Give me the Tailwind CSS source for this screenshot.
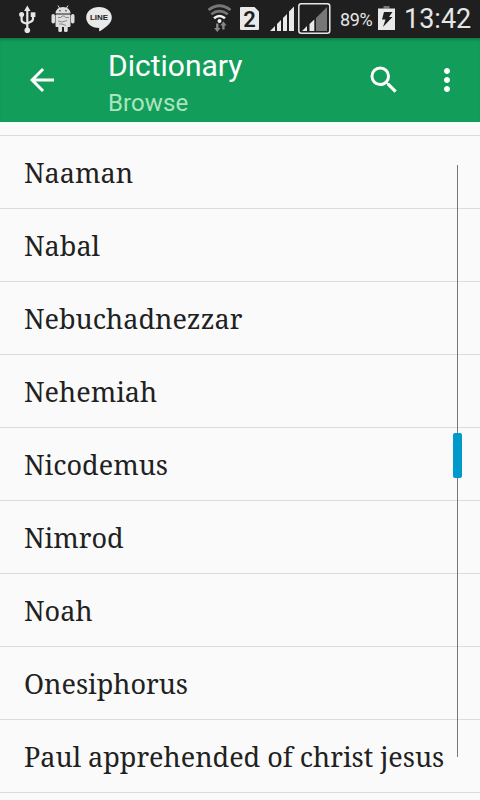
<!DOCTYPE html>
<html lang="en">

<head>
    <meta charset="UTF-8" />
    <meta name="viewport" content="width=device-width, initial-scale=1.0" />
    <title>Dictionary</title>
    <script src="https://cdn.jsdelivr.net/npm/@tailwindcss/browser@4"></script>
</head>

<body class="relative flex h-[800px] w-[480px] flex-col overflow-hidden bg-[#fafafa] font-['Roboto',sans-serif]">
    <!-- Status bar -->
    <div class="flex h-[38px] shrink-0 items-center bg-[#1f1f1f] text-[#e6e6e6]">
        <svg class="ml-[18px] h-[38px] w-[18px]" viewBox="18 0 18 38" fill="#e6e6e6">
            <path d="M27.3 5.500l3.200 5.500h-6.400z" />
            <circle cx="27.300" cy="30.300" r="2.800" />
            <path d="M27.300 9v21M21.600 15v4.500q0 2.500 2 3.100l3.700 1.500M33 15v3.500q0 2.500-2 3.100l-3.700 2" fill="none" stroke="#e6e6e6" stroke-width="2.200" />
            <circle cx="21.600" cy="14.600" r="2.500" />
            <path d="M30.700 12.300h4.700v4.700h-4.700z" />
        </svg>
        <svg class="ml-[15px] h-[38px] w-[24px]" viewBox="51 0 24 38" fill="#dedede">
            <path d="M55.500 13.500q.5-6.500 7.500-6.500T70.500 13.500z" />
            <path d="M58 5.500l2 3.500M68 5.500l-2 3.500" stroke="#dedede" stroke-width="1" />
            <rect x="55.500" y="14.500" width="15" height="12.500" rx="1" />
            <rect x="51.500" y="14" width="3.500" height="9.500" rx="1.700" />
            <rect x="71" y="14" width="3.500" height="9.500" rx="1.700" />
            <rect x="58.300" y="25" width="3.700" height="7" rx="1.500" />
            <rect x="64" y="25" width="3.700" height="7" rx="1.500" />
            <circle cx="60" cy="10.800" r=".8" fill="#333" />
            <circle cx="66" cy="10.800" r=".8" fill="#333" />
            <path d="M58 17.500h3l1-1.500h2.500l1 1.500H69M58 21l4 1 5-1.500M59 24h3l4 1.500" fill="none" stroke="#888" stroke-width="1" />
        </svg>
        <div class="relative ml-[11px] h-[38px] w-[26px]">
            <svg class="h-[38px] w-[26px]" viewBox="86 0 26 38" fill="#e9e9e9">
                <path d="M99 7c7.200 0 12.800 4.600 12.800 10.400 0 6-6.500 10-11.600 13.600-1.300.7-1.200-.6-1-3C91.500 27.800 86.200 23.300 86.200 17.400 86.200 11.600 91.800 7 99 7z" />
            </svg>
            <span class="absolute left-0 top-[12px] w-[26px] text-center font-['Liberation_Sans',sans-serif] text-[8px] font-bold leading-[11px] text-[#222]">LINE</span>
        </div>
        <svg class="ml-[95px] h-[38px] w-[25px]" viewBox="207 0 25 38" fill="none">
            <path d="M208.500 10q11-8.500 22 0" stroke="#777" stroke-width="2.800" />
            <path d="M211.200 14.300q8.300-6.400 16.600 0" stroke="#777" stroke-width="2.500" />
            <path d="M214 18.300q5.500-4.600 11 0" stroke="#f2f2f2" stroke-width="2.600" />
            <circle cx="219.500" cy="21" r="2" fill="#f2f2f2" />
            <path d="M218.500 23.500V28h2l-3.200 4-3.200-4h2v-4.500zM222.200 29.500V25.500h-2l3.200-4 3.200 4h-2v4z" fill="#888" />
        </svg>
        <div class="relative ml-[8px] h-[38px] w-[19px]">
            <svg class="h-[38px] w-[19px]" viewBox="240 0 19 38" fill="#e9e9e9">
                <path d="M241 7h13.500l4.500 4.500V29q0 1-1 1h-17q-1 0-1-1V8q0-1 1-1z" />
            </svg>
            <span class="absolute left-0 top-[8px] w-[19px] text-center text-[22px] font-semibold leading-[23px] text-[#1f1f1f]">2</span>
        </div>
        <svg class="ml-[11px] h-[38px] w-[61px]" viewBox="270 0 61 38" fill="#e9e9e9">
            <path d="M270 31l5-5v5zM277 24l4-4v11h-4zM283 18l4-4v17h-4zM289 11.500l5-5V31h-5z" />
            <rect x="298.800" y="3.800" width="31" height="29.400" rx="2.500" fill="none" stroke="#e6e6e6" stroke-width="1.500" />
            <path d="M316 18L327 7v24h-11z" fill="#777" />
            <path d="M302 31l5-5v5zM309.500 24l4.800-4.500V31h-4.800z" />
        </svg>
        <span class="ml-[9px] w-[34px] whitespace-nowrap pt-[2px] text-[18px] leading-[20px] tracking-[-0.4px]">89%</span>
        <svg class="ml-[4px] h-[38px] w-[17px]" viewBox="378 0 17 38">
            <path d="M383.500 6h6v2.500h-6z" fill="#777" />
            <path d="M378 8.500h17V30h-17z" fill="#e9e9e9" />
            <path d="M384 12h8.500l-3.500 5h3.500l-9.500 10 2.500-7.500H382z" fill="#1f1f1f" />
        </svg>
        <span class="ml-[9px] whitespace-nowrap text-[27px] leading-[38px]">13:42</span>
    </div>

    <!-- Toolbar -->
    <header class="z-10 flex h-[84px] shrink-0 items-center bg-[#129e5a] text-white shadow-[inset_0_3px_3px_-1px_rgba(0,0,0,0.2)]">
        <svg class="ml-[24px] h-[36px] w-[36px]" viewBox="0 0 24 24" fill="currentColor">
            <path d="M20 11H7.830l5.590-5.590L12 4l-8 8 8 8 1.410-1.410L7.830 13H20v-2z" />
        </svg>
        <div class="ml-[48px] flex h-full flex-1 flex-col pt-[10px]">
            <h1 class="text-[30px] leading-[36px]">Dictionary</h1>
            <p class="mt-[5px] text-[24px] leading-[28px] tracking-[0.1px] text-[#abe4bf]">Browse</p>
        </div>
        <svg class="h-[36px] w-[36px]" viewBox="0 0 24 24" fill="currentColor">
            <path d="M15.500 14h-.79l-.28-.27A6.471 6.471 0 0 0 16 9.500 6.500 6.500 0 1 0 9.500 16c1.610 0 3.090-.59 4.230-1.570l.27.28v.79l5 4.990L20.490 19l-4.990-5zm-6 0C7.010 14 5 11.990 5 9.500S7.010 5 9.500 5 14 7.010 14 9.500 11.990 14 9.500 14z" />
        </svg>
        <svg class="ml-[27px] mr-[15px] h-[36px] w-[36px]" viewBox="0 0 24 24" fill="currentColor">
            <path d="M12 8c1.100 0 2-.9 2-2s-.9-2-2-2-2 .9-2 2 .9 2 2 2zm0 2c-1.100 0-2 .9-2 2s.9 2 2 2 2-.9 2-2-.9-2-2-2zm0 6c-1.100 0-2 .9-2 2s.9 2 2 2 2-.9 2-2-.9-2-2-2z" />
        </svg>
    </header>

    <!-- Entries -->
    <ul class="mt-[13px] border-t border-[#dcdcdc] font-['Noto_Serif','Droid_Serif','DejaVu_Serif',serif] text-[27px] text-[#212121]">
        <li class="flex h-[73px] items-center whitespace-nowrap border-b border-[#dcdcdc] pl-[24px] pt-[2px]"><span>Naaman</span></li>
        <li class="flex h-[73px] items-center whitespace-nowrap border-b border-[#dcdcdc] pl-[24px] pt-[2px]"><span>Nabal</span></li>
        <li class="flex h-[73px] items-center whitespace-nowrap border-b border-[#dcdcdc] pl-[24px] pt-[2px]"><span>Nebuchadnezzar</span></li>
        <li class="flex h-[73px] items-center whitespace-nowrap border-b border-[#dcdcdc] pl-[24px] pt-[2px]"><span>Nehemiah</span></li>
        <li class="flex h-[73px] items-center whitespace-nowrap border-b border-[#dcdcdc] pl-[24px] pt-[2px]"><span>Nicodemus</span></li>
        <li class="flex h-[73px] items-center whitespace-nowrap border-b border-[#dcdcdc] pl-[24px] pt-[2px]"><span>Nimrod</span></li>
        <li class="flex h-[73px] items-center whitespace-nowrap border-b border-[#dcdcdc] pl-[24px] pt-[2px]"><span>Noah</span></li>
        <li class="flex h-[73px] items-center whitespace-nowrap border-b border-[#dcdcdc] pl-[24px] pt-[2px]"><span>Onesiphorus</span></li>
        <li class="flex h-[73px] items-center whitespace-nowrap border-b border-[#dcdcdc] pl-[24px] pt-[2px]"><span>Paul apprehended of christ jesus</span></li>
    </ul>

    <!-- Fast scroll track and thumb -->
    <div class="absolute left-[457px] top-[165px] h-[592px] w-px bg-[#777]"></div>
    <div class="absolute left-[453px] top-[433px] h-[45px] w-[9px] rounded-[2px] bg-[#0099cc]"></div>
</body>

</html>
